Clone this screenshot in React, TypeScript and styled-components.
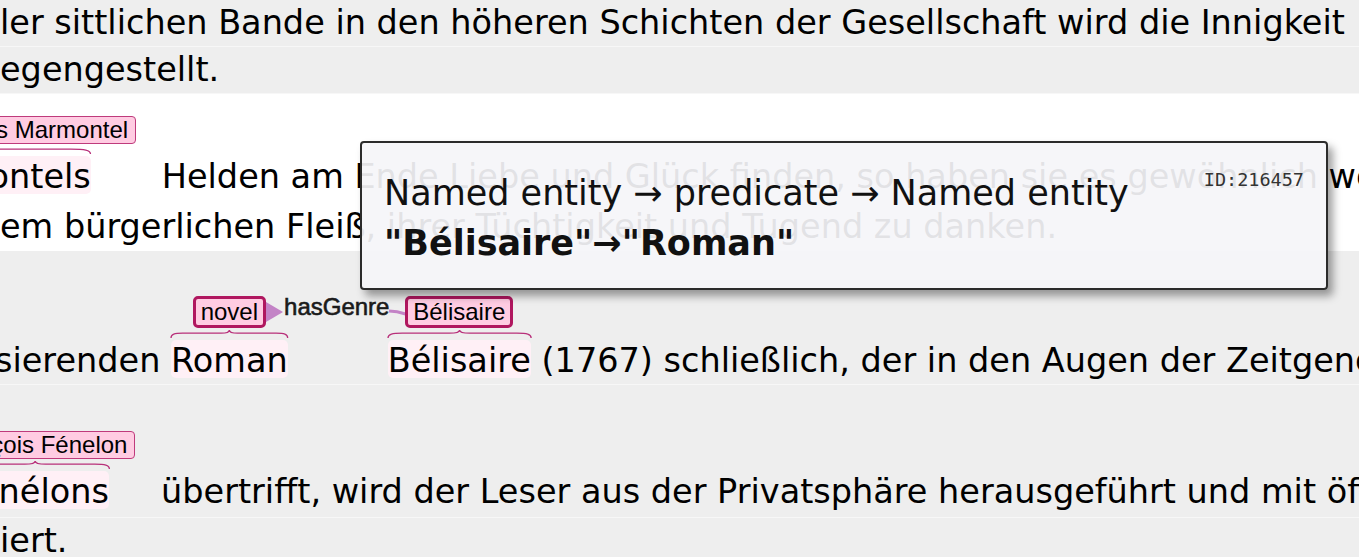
import React from 'react';
import styled, { createGlobalStyle } from 'styled-components';

const GlobalStyle = createGlobalStyle`
  html, body {
    margin: 0;
    padding: 0;
    overflow: hidden;
    background: #eeeeee;
  }
  body {
    font-family: 'DejaVu Sans', Verdana, sans-serif;
  }
`;

const Page = styled.div`
  position: relative;
  width: 1359px;
  height: 557px;
  overflow: hidden;
`;

const Sentence = styled.div<{ $shade?: boolean }>`
  background: ${p => (p.$shade ? '#eeeeee' : '#ffffff')};
`;

const Row = styled.div<{ $top?: number; $bottom?: number }>`
  display: flex;
  align-items: flex-end;
  white-space: nowrap;
  padding-top: ${p => p.$top ?? 0}px;
  padding-bottom: ${p => p.$bottom ?? 0}px;
  border-bottom: 1px solid rgba(255, 255, 255, 0.55);
  font-size: 33.5px;
  line-height: 46px;
  color: #000;
`;

// $lead emulates the horizontal scroll of the viewer: the start of a row is clipped
const Plain = styled.span<{ $lead?: number }>`
  white-space: pre;
  flex-shrink: 0;
  margin-left: ${p => p.$lead ?? 0}px;
`;

const SpanCol = styled.div<{ $lead?: number; $trail?: number }>`
  display: flex;
  flex-direction: column;
  align-items: center;
  flex-shrink: 0;
  margin-left: ${p => p.$lead ?? 0}px;
  margin-right: ${p => p.$trail ?? 0}px;
`;

const LabelWrap = styled.div`
  position: relative;
`;

const Label = styled.div<{ $active?: boolean }>`
  font-family: 'Liberation Sans', Arial, sans-serif;
  font-size: 24px;
  line-height: 26px;
  padding: 0 ${p => (p.$active ? 5 : 7)}px;
  color: #000;
  background: #ffcce2;
  border: ${p => (p.$active ? '3px solid #b0175f' : '1px solid #bf3a7c')};
  border-radius: ${p => (p.$active ? 5 : 4)}px;
`;

const Under = styled.div`
  display: flex;
  flex-direction: column;
  padding-top: 2px;
`;

const Bracket = styled.svg`
  display: block;
  width: 100%;
  height: 8px;
  overflow: visible;
`;

const Word = styled.span`
  position: relative;
  z-index: 0;
  &::before {
    content: '';
    position: absolute;
    left: 0;
    right: 0;
    top: 2px;
    bottom: 6px;
    border-radius: 5px;
    background: #fff0f6;
    z-index: -1;
  }
`;

const Arc = styled.div`
  position: absolute;
  left: 100%;
  top: 50%;
  width: 140px;
  height: 24px;
  transform: translateY(-50%);
  display: flex;
  align-items: center;
`;

const ArcLabel = styled.span`
  font-family: 'Liberation Sans', Arial, sans-serif;
  font-size: 24px;
  line-height: 22px;
  color: #1a1a1a;
  -webkit-text-stroke: 0.6px #1a1a1a;
  margin: -10px 0 0 1px;
`;

const ArcLine = styled.svg`
  flex: 1;
  height: 12px;
`;

const Tooltip = styled.div`
  position: absolute;
  left: 360px;
  top: 141px;
  width: 968px;
  height: 149px;
  box-sizing: border-box;
  padding: 25px 22px 0 22px;
  background: rgba(245, 245, 248, 0.92);
  border: 2px solid #2b2b2b;
  border-radius: 4px;
  box-shadow: 5px 6px 8px rgba(0, 0, 0, 0.38);
  font-size: 35px;
  line-height: 50px;
  color: #111;
  white-space: nowrap;
`;

const TipBold = styled.div`
  font-weight: bold;
`;

const TipId = styled.span`
  position: absolute;
  top: 26px;
  right: 22px;
  font-family: 'DejaVu Sans Mono', 'Liberation Mono', monospace;
  font-size: 18.5px;
  line-height: 22px;
  color: #333;
`;

const CurlyBrace = () => (
  <Bracket viewBox="0 0 100 10" preserveAspectRatio="none">
    <path
      d="M0,10 C0,5 3,4 10,4 L43,4 C48,4 50,3 50,0 C50,3 52,4 57,4 L90,4 C97,4 100,5 100,10"
      fill="none"
      stroke="#b8307a"
      strokeWidth={1.3}
      vectorEffect="non-scaling-stroke"
    />
  </Bracket>
);

interface EntityProps {
  label: string;
  word: string;
  active?: boolean;
  lead?: number;
  trail?: number;
  arc?: React.ReactNode;
}

const Entity: React.FC<EntityProps> = ({ label, word, active, lead, trail, arc }) => (
  <SpanCol $lead={lead} $trail={trail}>
    <LabelWrap>
      <Label $active={active}>{label}</Label>
      {arc}
    </LabelWrap>
    <Under>
      <CurlyBrace />
      <Word>{word}</Word>
    </Under>
  </SpanCol>
);

const GenreArc = () => (
  <Arc>
    <svg width="17" height="20" viewBox="0 0 17 20">
      <polygon points="0,0 17,10 0,20" fill="#c383c6" />
    </svg>
    <ArcLabel>hasGenre</ArcLabel>
    <ArcLine viewBox="0 0 17 12" preserveAspectRatio="none">
      <path d="M0,5 Q8,5 17,8" fill="none" stroke="#c383c6" strokeWidth={3} />
    </ArcLine>
  </Arc>
);

const App: React.FC = () => (
  <Page>
    <GlobalStyle />
    <Sentence $shade>
      <Row>
        <Plain>ler sittlichen Bande in den höheren Schichten der Gesellschaft wird die Innigkeit</Plain>
      </Row>
      <Row>
        <Plain>egengestellt.</Plain>
      </Row>
    </Sentence>
    <Sentence>
      <Row $top={22} $bottom={3}>
        <Entity label="Jean-François Marmontel" word="Marmontels" lead={-152} trail={15} />
        <Plain> Helden am Ende Liebe und Glück finden, so haben sie es gewöhnlich weniger dem Zufall</Plain>
      </Row>
      <Row>
        <Plain>em bürgerlichen Fleiß, ihrer Tüchtigkeit und Tugend zu danken.</Plain>
      </Row>
    </Sentence>
    <Sentence $shade>
      <Row $top={45}>
        <Plain $lead={-5}>sierenden </Plain>
        <Entity label="novel" word="Roman" active trail={100} arc={<GenreArc />} />
        <Entity label="Bélisaire" word="Bélisaire" active />
        <Plain> (1767) schließlich, der in den Augen der Zeitgenossen sogar</Plain>
      </Row>
      <Row $top={46} $bottom={2}>
        <Entity label="François Fénelon" word="Fénélons" lead={-66} trail={15} />
        <Plain> übertrifft, wird der Leser aus der Privatsphäre herausgeführt und mit öffentlichen</Plain>
      </Row>
      <Row>
        <Plain>iert.</Plain>
      </Row>
    </Sentence>
    <Tooltip>
      <TipId>ID:216457</TipId>
      <div>Named entity → predicate → Named entity</div>
      <TipBold>"Bélisaire"→"Roman"</TipBold>
    </Tooltip>
  </Page>
);

export default App;
